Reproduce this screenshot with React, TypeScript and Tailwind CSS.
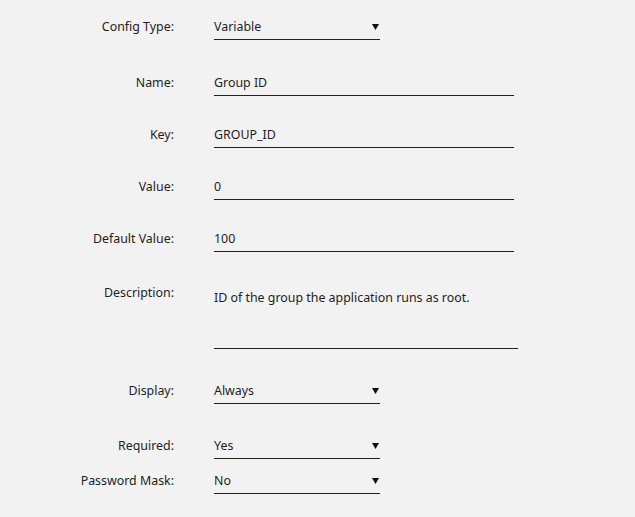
import type { ReactNode } from 'react';

function Caret() {
  return (
    <svg width="7" height="6" viewBox="0 0 7 6" className="shrink-0">
      <path d="M0 0h7L3.5 6z" fill="#111" />
    </svg>
  );
}

function Row({ label, children, className = '' }: { label: string; children: ReactNode; className?: string }) {
  return (
    <div className={`flex items-start gap-[40px] ${className}`}>
      <div className="w-[174px] shrink-0 text-right leading-[24px]">{label}</div>
      {children}
    </div>
  );
}

function TextField({ value }: { value: string }) {
  return (
    <div className="w-[300px] h-[25px] border-b border-[#222] leading-[24px]">{value}</div>
  );
}

function SelectField({ value }: { value: string }) {
  return (
    <div className="w-[166px] h-[25px] border-b border-[#222] flex items-center justify-between pr-[1px]">
      <span className="leading-[24px]">{value}</span>
      <Caret />
    </div>
  );
}

export default function App() {
  return (
    <div
      className="w-[635px] h-[517px] bg-[#f2f2f2] text-[#1e1e1e] text-[12.4px] pt-[15px]"
      style={{ fontFamily: '"Noto Sans", "Open Sans", sans-serif' }}
    >
      <Row label="Config Type:">
        <SelectField value="Variable" />
      </Row>
      <Row label="Name:" className="mt-[31px]">
        <TextField value="Group ID" />
      </Row>
      <Row label="Key:" className="mt-[27px]">
        <TextField value="GROUP_ID" />
      </Row>
      <Row label="Value:" className="mt-[27px]">
        <TextField value="0" />
      </Row>
      <Row label="Default Value:" className="mt-[27px]">
        <TextField value="100" />
      </Row>
      <Row label="Description:" className="mt-[29px]">
        <div className="w-[304px] h-[68px] border-b border-[#222] pt-[5px] leading-[24px]">
          ID of the group the application runs as root.
        </div>
      </Row>
      <Row label="Display:" className="mt-[30px]">
        <SelectField value="Always" />
      </Row>
      <Row label="Required:" className="mt-[30px]">
        <SelectField value="Yes" />
      </Row>
      <Row label="Password Mask:" className="mt-[10px]">
        <SelectField value="No" />
      </Row>
    </div>
  );
}
